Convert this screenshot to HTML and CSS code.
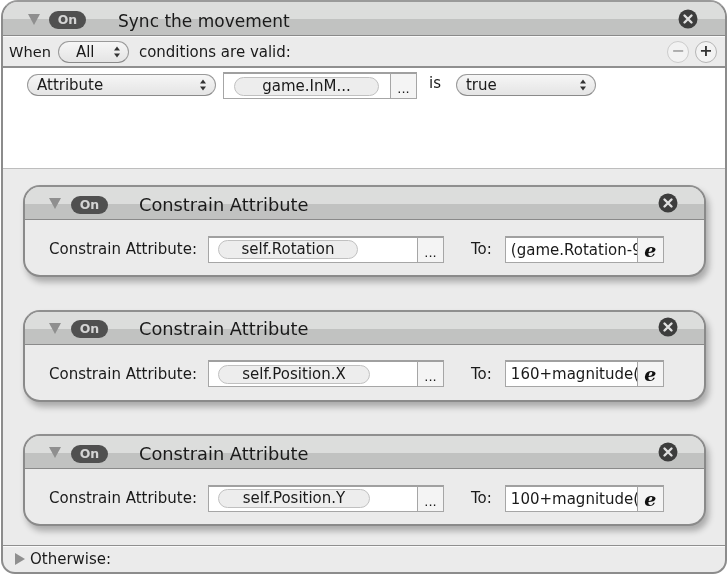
FILE: index.html
```html
<!DOCTYPE html>
<html lang="en">
<head>
<meta charset="utf-8">
<title>Sync the movement</title>
<link rel="stylesheet" href="styles.css">
</head>
<body>
<svg class="defs" width="0" height="0" aria-hidden="true">
  <defs>
    <symbol id="stepper" viewBox="0 0 8 12"><path d="M4 .5 7 4.5H1ZM4 11.5 1 7.5H7Z" fill="#333"/></symbol>
    <symbol id="close" viewBox="0 0 20 20"><circle cx="10" cy="10" r="9.5" fill="#3d3d3d"/><path d="M6.5 6.5l7 7M13.5 6.5l-7 7" stroke="#e0e0e0" stroke-width="2.4" stroke-linecap="round"/></symbol>
    <symbol id="down" viewBox="0 0 12 11"><path d="M0 0H12L6 11Z" fill="#8f8f8f"/></symbol>
  </defs>
</svg>
<main class="panel">
  <header class="bar main-bar">
    <svg class="tri"><use href="#down"/></svg>
    <span class="toggle">On</span>
    <h1 class="title main-title">Sync the movement</h1>
    <svg class="close main-close"><use href="#close"/></svg>
  </header>
  <div class="when">
    <span class="when-word">When</span>
    <span class="select sel-all">All<svg class="step"><use href="#stepper"/></svg></span>
    <span>conditions are valid:</span>
    <span class="roundbtns">
      <span class="round dim">−</span>
      <span class="round">+</span>
    </span>
  </div>
  <section class="conds">
    <span class="select sel-attr">Attribute<svg class="step"><use href="#stepper"/></svg></span>
    <span class="field cond-field"><span class="token cond-token">game.InM...</span></span><span class="more">...</span>
    <span class="is">is</span>
    <span class="select sel-true">true<svg class="step"><use href="#stepper"/></svg></span>
  </section>
  <section class="actions">
    <article class="card">
      <header class="bar card-bar">
        <svg class="tri"><use href="#down"/></svg>
        <span class="toggle">On</span>
        <h2 class="title card-title">Constrain Attribute</h2>
        <svg class="close card-close"><use href="#close"/></svg>
      </header>
      <div class="card-body">
        <span class="label">Constrain Attribute:</span>
        <span class="field attr-field"><span class="token tok-1">self.Rotation</span></span><span class="more">...</span>
        <span class="to">To:</span>
        <span class="field expr">(game.Rotation-9</span><span class="more e">e</span>
      </div>
    </article>
    <article class="card">
      <header class="bar card-bar">
        <svg class="tri"><use href="#down"/></svg>
        <span class="toggle">On</span>
        <h2 class="title card-title">Constrain Attribute</h2>
        <svg class="close card-close"><use href="#close"/></svg>
      </header>
      <div class="card-body">
        <span class="label">Constrain Attribute:</span>
        <span class="field attr-field"><span class="token tok-2">self.Position.X</span></span><span class="more">...</span>
        <span class="to">To:</span>
        <span class="field expr">160+magnitude(</span><span class="more e">e</span>
      </div>
    </article>
    <article class="card">
      <header class="bar card-bar">
        <svg class="tri"><use href="#down"/></svg>
        <span class="toggle">On</span>
        <h2 class="title card-title">Constrain Attribute</h2>
        <svg class="close card-close"><use href="#close"/></svg>
      </header>
      <div class="card-body">
        <span class="label">Constrain Attribute:</span>
        <span class="field attr-field"><span class="token tok-2">self.Position.Y</span></span><span class="more">...</span>
        <span class="to">To:</span>
        <span class="field expr">100+magnitude(</span><span class="more e">e</span>
      </div>
    </article>
  </section>
  <footer class="otherwise">
    <svg class="tri-right" viewBox="0 0 10 12"><path d="M0 0 10 6 0 12Z" fill="#8f8f8f"/></svg>
    <span>Otherwise:</span>
  </footer>
</main>
</body>
</html>
```
FILE: styles.css
```css
* { box-sizing: border-box; }
html, body { margin: 0; padding: 0; background: #fff; }
body {
  width: 728px;
  height: 575px;
  overflow: hidden;
  font-family: "DejaVu Sans", sans-serif;
  font-size: 15px;
  color: #1a1a1a;
  filter: blur(0.4px);
}
.defs { position: absolute; }
.panel {
  width: 726px;
  height: 574px;
  margin: 0 0 0 1px;
  border: 2px solid #8c8c8c;
  border-top-color: #9a9a9a;
  border-radius: 17px 17px 14px 14px;
  overflow: hidden;
  background: #ebebeb;
  display: flex;
  flex-direction: column;
}
.bar {
  display: flex;
  align-items: center;
  background: linear-gradient(#dcdddc 0 53%, #c1c2c1 53% 100%);
  border-bottom: 1px solid #8a8a8a;
}
.main-bar { height: 34px; flex: none; padding: 0 0 0 25px; }
.card-bar { height: 33px; flex: none; padding: 0 0 0 24px; }
.tri { width: 12px; height: 11px; flex: none; margin-top: 1px; }
.toggle {
  width: 37px;
  height: 18px;
  margin: 3px 0 0 10px;
  flex: none;
  border-radius: 9px;
  background: #505050;
  color: #d4d4d4;
  font-size: 12.5px;
  font-weight: 700;
  line-height: 17px;
  text-align: center;
}
.main-bar .toggle { margin-left: 9px; }
.title { margin: 0; font-weight: 400; color: #1a1a1a; white-space: nowrap; }
.main-title { font-size: 17px; margin: 4px 0 0 32px; }
.card-title { font-size: 17.8px; margin: 2px 0 0 31px; }
.close { width: 20px; height: 20px; flex: none; margin-left: auto; }
.main-close { margin-right: 27px; margin-top: 0; }
.card-close { margin-right: 26px; margin-top: -1px; }

.when {
  height: 32px;
  flex: none;
  display: flex;
  align-items: center;
  padding: 0 0 0 6px;
  border-top: 1px solid #fafafa;
  border-bottom: 2px solid #8f8f8f;
  white-space: nowrap;
}
.when-word { font-size: 14.6px; }
.select {
  display: inline-flex;
  align-items: center;
  justify-content: space-between;
  height: 22px;
  border: 1.5px solid #9a9a9a;
  border-bottom-color: #8a8a8a;
  border-radius: 11px;
  background: linear-gradient(#f6f6f6, #e4e4e4);
}
.step { width: 8px; height: 12px; flex: none; }
.sel-all { width: 71px; margin: 0 10px 0 7px; padding: 0 7px 0 17px; }
.roundbtns { margin-left: auto; margin-right: 8px; display: flex; gap: 6px; }
.round {
  width: 22px;
  height: 22px;
  border: 1.5px solid #b5b5b5;
  border-radius: 50%;
  background: #f2f2f2;
  text-align: center;
  font-size: 16px;
  font-weight: 700;
  line-height: 18px;
  color: #333;
}
.round.dim { color: #aaa; border-color: #ccc; }

.conds {
  height: 101px;
  flex: none;
  display: flex;
  align-items: flex-start;
  padding: 4px 0 0 24px;
  background: #fff;
  border-bottom: 1px solid #bdbdbd;
}
.sel-attr { width: 189px; margin-top: 2px; padding: 0 8px 0 9px; }
.sel-true { width: 140px; margin-top: 2px; padding: 0 8px 0 9px; }
.field {
  display: flex;
  align-items: center;
  background: #fff;
  border: 1px solid #a6a6a6;
  border-top: 2px solid #a0a0a0;
  white-space: nowrap;
  overflow: hidden;
}
.cond-field { width: 168px; height: 27px; margin-left: 7px; padding-left: 10px; }
.more {
  display: flex;
  align-items: center;
  justify-content: center;
  width: 26px;
  height: 27px;
  flex: none;
  background: #f4f4f4;
  border: 1px solid #a6a6a6;
  border-top: 2px solid #a0a0a0;
  border-left: 0;
  font-size: 13px;
  padding-top: 5px;
}
.token {
  display: block;
  height: 19px;
  border: 1px solid #c0c0c0;
  border-radius: 10px;
  background: #ededed;
  line-height: 17px;
  text-align: center;
  flex: none;
}
.cond-token { width: 145px; }
.is { margin: 2px 15px 0 12px; }
.actions {
  flex: 1;
  min-height: 0;
  padding: 16px 20px 0 20px;
  display: flex;
  flex-direction: column;
  gap: 32.5px;
}
.card {
  flex: none;
  height: 92px;
  width: 683px;
  border: 2px solid #8a8a8a;
  border-top-color: #8f8f8f;
  border-radius: 17px;
  overflow: hidden;
  background: #ebebeb;
  box-shadow: 3px 5px 6px rgba(0,0,0,.28);
}
.card-body {
  display: flex;
  align-items: center;
  height: 55px;
  padding: 3px 0 0 24px;
  white-space: nowrap;
}
.label { width: 159px; flex: none; }
.attr-field { width: 210px; height: 27px; padding-left: 9px; flex: none; }
.tok-1 { width: 140px; }
.tok-2 { width: 152px; }
.to { margin: 0 13px 0 27px; }
.expr { width: 133px; height: 27px; padding-left: 5px; flex: none; }
.more.e {
  padding: 0;
  font-family: "DejaVu Serif", serif;
  font-weight: 700;
  font-style: italic;
  font-size: 19px;
  color: #111;
}
.otherwise {
  flex: none;
  height: 27px;
  display: flex;
  align-items: center;
  gap: 5px;
  padding-left: 12px;
  border-top: 1px solid #8f8f8f;
  box-shadow: inset 0 1px 0 #fafafa;
}
.tri-right { width: 10px; height: 12px; flex: none; }
```
